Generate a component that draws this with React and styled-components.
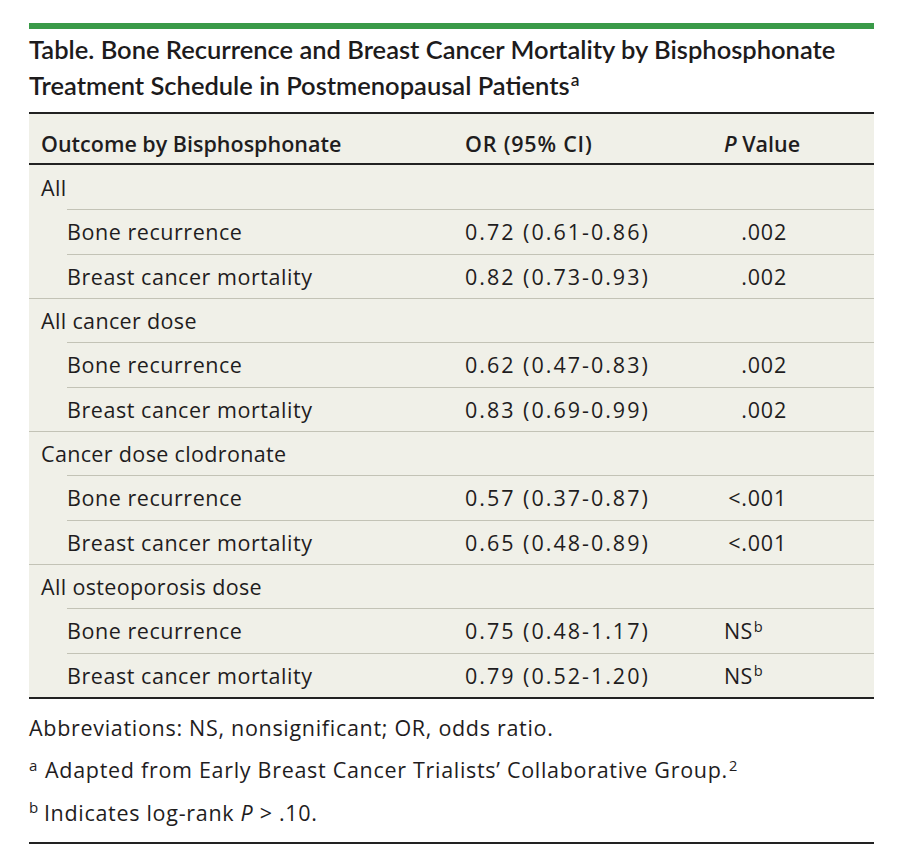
import React from "react";
import styled, { createGlobalStyle } from "styled-components";

const GlobalStyle = createGlobalStyle`
  body {
    margin: 0;
    background: #ffffff;
    font-family: "Open Sans", "Liberation Sans", sans-serif;
    color: #1f1d1e;
  }
`;

const rows = [
  { group: "All" },
  { label: "Bone recurrence", or: "0.72 (0.61-0.86)", p: ".002" },
  { label: "Breast cancer mortality", or: "0.82 (0.73-0.93)", p: ".002" },
  { group: "All cancer dose" },
  { label: "Bone recurrence", or: "0.62 (0.47-0.83)", p: ".002" },
  { label: "Breast cancer mortality", or: "0.83 (0.69-0.99)", p: ".002" },
  { group: "Cancer dose clodronate" },
  { label: "Bone recurrence", or: "0.57 (0.37-0.87)", p: "<.001" },
  { label: "Breast cancer mortality", or: "0.65 (0.48-0.89)", p: "<.001" },
  { group: "All osteoporosis dose" },
  { label: "Bone recurrence", or: "0.75 (0.48-1.17)", ns: true },
  { label: "Breast cancer mortality", or: "0.79 (0.52-1.20)", ns: true },
];

const App = () => {
  return (
    <Page>
      <GlobalStyle />
      <GreenBar />
      <Title>
        Table. Bone Recurrence and Breast Cancer Mortality by Bisphosphonate
        Treatment Schedule in Postmenopausal Patients<Sup>a</Sup>
      </Title>
      <Table>
        <HeaderRow>
          <span>Outcome by Bisphosphonate</span>
          <HeadCell>OR (95% CI)</HeadCell>
          <span>
            <i>P</i> Value
          </span>
        </HeaderRow>
        {rows.map((r, i) =>
          r.group ? (
            <Row key={i} first={i === 0}>
              <span>{r.group}</span>
            </Row>
          ) : (
            <Row key={i} indent>
              <Label>{r.label}</Label>
              <Numeric>{r.or}</Numeric>
              {r.ns ? (
                <span>
                  NS<Sup>b</Sup>
                </span>
              ) : (
                <PValue>{r.p}</PValue>
              )}
            </Row>
          )
        )}
      </Table>
      <Notes>
        <Note>Abbreviations: NS, nonsignificant; OR, odds ratio.</Note>
        <Note>
          <NoteMark $gap={7}>a</NoteMark>Adapted from Early Breast Cancer
          Trialists’ Collaborative Group.<Sup>2</Sup>
        </Note>
        <Note>
          <NoteMark $gap={5}>b</NoteMark>Indicates log-rank <i>P</i> &gt; .10.
        </Note>
      </Notes>
    </Page>
  );
};

export default App;

const Page = styled.div`
  width: 845px;
  padding: 23px 0 0 29px;
`;

const GreenBar = styled.div`
  height: 6px;
  background: #3a9a48;
`;

const Title = styled.div`
  padding-top: 2px;
  font-family: Lato, "Liberation Sans", sans-serif;
  font-size: 25.5px;
  font-weight: 600;
  line-height: 36px;
  color: #1d1b1c;
`;

const Sup = styled.sup`
  font-size: 0.68em;
  line-height: 0;
  vertical-align: 0.5em;
  margin-left: 1px;
`;

const Table = styled.div`
  margin-top: 9px;
  background: #f0f0e8;
  border-top: 2px solid #222222;
  border-bottom: 2px solid #222222;
  font-size: 21.5px;
  letter-spacing: 0.35px;
`;

const HeaderRow = styled.div`
  display: grid;
  grid-template-columns: 424px 259px 1fr;
  padding: 15px 0 4px 12px;
  line-height: 30px;
  font-weight: 600;
  letter-spacing: 0;
  border-bottom: 2px solid #222222;

  i {
    font-style: italic;
  }
`;

const HeadCell = styled.span`
  letter-spacing: 0.8px;
`;

const Row = styled.div`
  box-sizing: border-box;
  height: 44.33px;
  display: grid;
  align-items: center;
  grid-template-columns: ${(p) => (p.indent ? "398px 259px 1fr" : "424px 259px 1fr")};
  margin-left: ${(p) => (p.indent ? "38px" : "0")};
  padding-left: ${(p) => (p.indent ? "0" : "12px")};
  border-top: ${(p) => (p.first ? "none" : "1px solid #c3c3b6")};
`;

const Label = styled.span`
  letter-spacing: 0.55px;
`;

const Numeric = styled.span`
  letter-spacing: 2px;
`;

const PValue = styled.span`
  display: inline-block;
  width: 63px;
  text-align: right;
  letter-spacing: 0.8px;
`;

const Notes = styled.div`
  margin-top: 8px;
  padding-bottom: 8px;
  border-bottom: 2px solid #222222;
  font-size: 21.5px;
  letter-spacing: 0.7px;
`;

const Note = styled.div`
  line-height: 42.5px;
`;

const NoteMark = styled.sup`
  font-size: 0.7em;
  line-height: 0;
  vertical-align: 0.5em;
  margin-right: ${(p) => p.$gap}px;
`;
